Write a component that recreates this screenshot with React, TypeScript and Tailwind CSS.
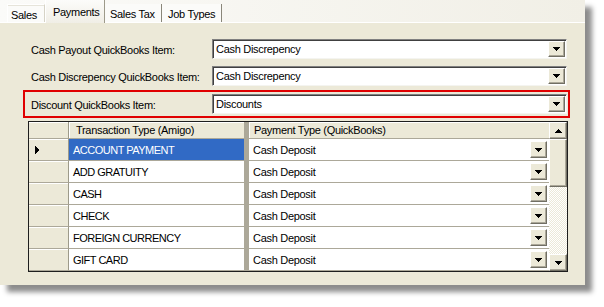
import React from "react";

const DownArrow = () => (
  <svg width="7" height="4" viewBox="0 0 7 4" shapeRendering="crispEdges">
    <rect x="0" y="0" width="7" height="1" fill="#000" />
    <rect x="1" y="1" width="5" height="1" fill="#000" />
    <rect x="2" y="2" width="3" height="1" fill="#000" />
    <rect x="3" y="3" width="1" height="1" fill="#000" />
  </svg>
);

const UpArrow = () => (
  <svg width="7" height="4" viewBox="0 0 7 4" shapeRendering="crispEdges">
    <rect x="3" y="0" width="1" height="1" fill="#000" />
    <rect x="2" y="1" width="3" height="1" fill="#000" />
    <rect x="1" y="2" width="5" height="1" fill="#000" />
    <rect x="0" y="3" width="7" height="1" fill="#000" />
  </svg>
);

const raised =
  "flex items-center justify-center bg-[#ece9d8] border border-t-white border-l-white border-r-[#716f64] border-b-[#716f64] shadow-[inset_-1px_-1px_0_#aca899]";

const Combo = ({ value }: { value: string }) => (
  <div className="w-[355px] h-[20px] bg-white border border-t-[#808080] border-l-[#808080] border-r-[#f4f4f0] border-b-[#f4f4f0] shadow-[inset_1px_1px_0_#404040] flex items-center pl-[3px] pr-px">
    <span className="flex-1 leading-[13px]">{value}</span>
    <div className={`${raised} w-[17px] h-[16px]`}>
      <DownArrow />
    </div>
  </div>
);

const rows = [
  "ACCOUNT PAYMENT",
  "ADD GRATUITY",
  "CASH",
  "CHECK",
  "FOREIGN CURRENCY",
  "GIFT CARD",
];

export default function App() {
  return (
    <div className="w-[604px] h-[307px] bg-white font-['Liberation_Sans',Arial,sans-serif] text-[11px] tracking-[-0.3px] text-black overflow-hidden">
      <div className="w-[585px] h-[285px] bg-[#ece9d8] shadow-[7px_7px_5px_rgba(0,0,0,0.45)] flex flex-col">
        {/* tab strip */}
        <div className="h-[22px] flex items-end bg-[linear-gradient(90deg,#fbfbf9,#f1efe6)]">
          <div className="ml-[7px] w-[38px] h-[18px] pl-[3px] pt-[4px] leading-[13px] bg-[#fbfbf9] border-t border-l border-white border-r border-r-[#d6d3c6] shadow-[inset_0_1px_0_#e6e4da]">
            Sales
          </div>
          <div className="relative z-10 -mb-px w-[60px] h-[23px] pl-[7px] pt-[6px] leading-[13px] bg-[linear-gradient(#fcfcfa,#f0eee6)] border-l border-white border-r border-r-[#9d9a8a]">
            Payments
          </div>
          <div className="w-[57px] h-[18px] pl-[5px] pt-[4px] leading-[13px] bg-[#fbfbf9] border-r border-r-[#8a877a]">
            Sales Tax
          </div>
          <div className="w-[60px] h-[18px] pl-[6px] pt-[4px] leading-[13px] bg-[#fbfbf9] border-r border-r-[#8a877a]">
            Job Types
          </div>
        </div>

        {/* page body */}
        <div className="flex-1 border-t border-white flex flex-col">
          <div className="mt-[16px] pl-[31px] flex items-center">
            <div className="w-[181px] leading-[13px] pt-[2px]">Cash Payout QuickBooks Item:</div>
            <Combo value="Cash Discrepency" />
          </div>
          <div className="mt-[7px] pl-[31px] flex items-center">
            <div className="w-[181px] leading-[13px] pt-[2px]">Cash Discrepency QuickBooks Item:</div>
            <Combo value="Cash Discrepency" />
          </div>
          <div className="mt-[4px] ml-[23px] w-[547px] h-[28px] border-2 border-[#e00000] pl-[6px] flex items-center">
            <div className="w-[181px] leading-[13px] pt-[2px]">Discount QuickBooks Item:</div>
            <Combo value="Discounts" />
          </div>

          {/* grid */}
          <div className="mt-[3px] ml-[28px] w-[540px] h-[151px] border border-[#1e1e1e] flex bg-white overflow-hidden">
            <div className="w-[520px] flex flex-col">
              <div className="h-[17px] flex shrink-0">
                <div className="w-[40px] bg-[#ece9d8] border-r border-r-[#9d9a8a] border-b border-b-[#aca899] shadow-[inset_0_1px_0_#fff]" />
                <div className="w-[175px] bg-[#ece9d8] border-b border-b-[#aca899] shadow-[inset_1px_1px_0_#fff] pl-[7px] leading-[16px]">
                  Transaction Type (Amigo)
                </div>
                <div className="w-[5px] bg-[#aca899]" />
                <div className="w-[300px] bg-[#ece9d8] border-b border-b-[#aca899] shadow-[inset_1px_1px_0_#fff] pl-[5px] leading-[16px]">
                  Payment Type (QuickBooks)
                </div>
              </div>
              {rows.map((r, i) => (
                <div key={r} className="h-[22px] flex shrink-0">
                  <div className="w-[40px] bg-[#ece9d8] border-r border-r-[#9d9a8a] border-b border-b-[#aca899] shadow-[inset_0_1px_0_#fff] flex items-center pl-[6px]">
                    {i === 0 && (
                      <svg width="4" height="8" viewBox="0 0 4 8" shapeRendering="crispEdges">
                        <path d="M0 0H1V8H0Z M1 1H2V7H1Z M2 2H3V6H2Z M3 3H4V5H3Z" fill="#000" />
                      </svg>
                    )}
                  </div>
                  <div
                    className={`w-[175px] border-b border-b-[#aca899] flex items-center pl-[4px] pt-px tracking-[-0.5px] ${
                      i === 0 ? "bg-[#316ac5] text-white" : "bg-white"
                    }`}
                  >
                    {r}
                  </div>
                  <div className="w-[5px] bg-[#aca899]" />
                  <div className="w-[300px] border-b border-b-[#aca899] flex items-center pl-[4px] pr-[2px]">
                    <span className="flex-1 pt-px">Cash Deposit</span>
                    <div className={`${raised} w-[17px] h-[17px]`}>
                      <DownArrow />
                    </div>
                  </div>
                </div>
              ))}
            </div>
            {/* scrollbar */}
            <div className="w-[18px] flex flex-col">
              <div className={`${raised} h-[17px] shrink-0`}>
                <UpArrow />
              </div>
              <div className={`${raised} h-[48px] shrink-0`} />
              <div className="flex-1 bg-[repeating-conic-gradient(#ece9d8_0_25%,#ffffff_0_50%)] bg-[length:2px_2px]" />
              <div className={`${raised} h-[17px] shrink-0`}>
                <DownArrow />
              </div>
            </div>
          </div>
        </div>
      </div>
    </div>
  );
}
